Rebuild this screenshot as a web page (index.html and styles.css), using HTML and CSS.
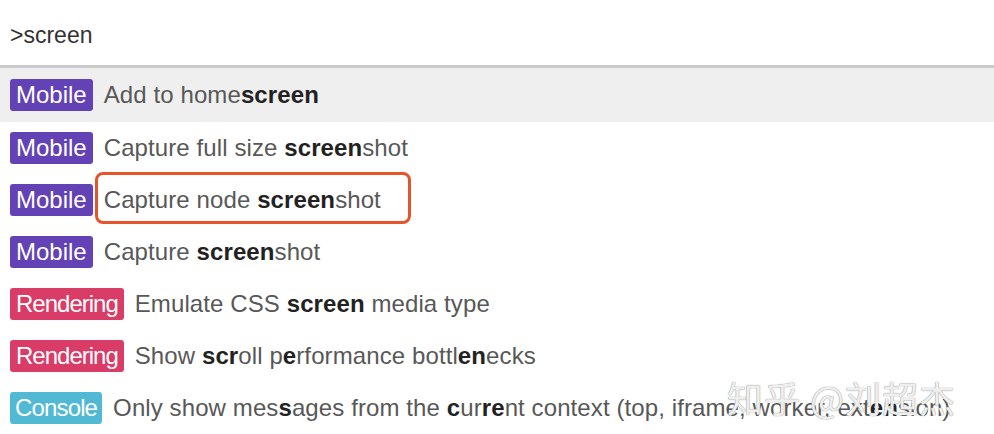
FILE: index.html
```html
<!DOCTYPE html>
<html>
<head>
<meta charset="utf-8">
<link rel="stylesheet" href="styles.css">
</head>
<body>
<div class="palette">
  <div class="query">&gt;screen</div>
  <div class="list">
    <div class="row selected"><span class="badge mobile">Mobile</span><span class="label">Add to home<b>screen</b></span></div>
    <div class="row"><span class="badge mobile">Mobile</span><span class="label">Capture full size <b>screen</b>shot</span></div>
    <div class="row"><span class="badge mobile">Mobile</span><span class="label marked">Capture node <b>screen</b>shot</span></div>
    <div class="row"><span class="badge mobile">Mobile</span><span class="label">Capture <b>screen</b>shot</span></div>
    <div class="row"><span class="badge rendering">Rendering</span><span class="label">Emulate CSS <b>screen</b> media type</span></div>
    <div class="row"><span class="badge rendering">Rendering</span><span class="label">Show <b>scr</b>oll p<b>e</b>rformance bottl<b>en</b>ecks</span></div>
    <div class="row"><span class="badge console">Console</span><span class="label">Only show mes<b>s</b>ages from the <b>c</b>ur<b>re</b>nt context (top, iframe, worker, ext<b>en</b>sion)</span></div>
  </div>
  <div class="watermark">知乎 @刘超杰</div>
</div>
</body>
</html>
```

FILE: styles.css
```css
html, body {
  margin: 0;
  padding: 0;
  background: #fff;
}
.palette {
  position: relative;
  width: 994px;
  height: 434px;
  overflow: hidden;
  font-family: "Liberation Sans", Arial, sans-serif;
  font-size: 24px;
}
.query {
  height: 68px;
  box-sizing: border-box;
  padding: 21px 0 0 10px;
  color: #333;
  line-height: 28px;
  font-size: 23px;
  border-bottom: 3px solid #cacaca;
}
.row {
  height: 52px;
  display: flex;
  align-items: center;
  padding-left: 10px;
  gap: 11px;
  color: #585858;
  letter-spacing: 0.1px;
}
.row.selected {
  background: #efefef;
  height: 54px;
}
.badge {
  color: #fff;
  border-radius: 3px;
  height: 32px;
  line-height: 32px;
  padding: 0 6px;
  font-size: 24px;
  letter-spacing: 0;
}
.mobile { background: #6342b5; }
.rendering {
  background: #d83c67;
  letter-spacing: -1px;
}
.console {
  background: #52b9d5;
  letter-spacing: -0.85px;
  padding: 0 5px;
}
.label {
  line-height: 28px;
}
.label b {
  color: #222;
  font-weight: bold;
}
.marked {
  position: relative;
}
.marked::after {
  content: "";
  position: absolute;
  left: -9px;
  right: -30px;
  top: -14px;
  bottom: -10px;
  border: 3px solid #e8542a;
  border-radius: 8px;
}
.watermark {
  position: absolute;
  left: 727px;
  top: 379px;
  font-family: "Noto Sans CJK SC", sans-serif;
  font-size: 36px;
  line-height: 36px;
  color: rgba(255,255,255,0.85);
  text-shadow: 0 0 1px #999, 0 0 1px #999;
  letter-spacing: 1px;
}
```
